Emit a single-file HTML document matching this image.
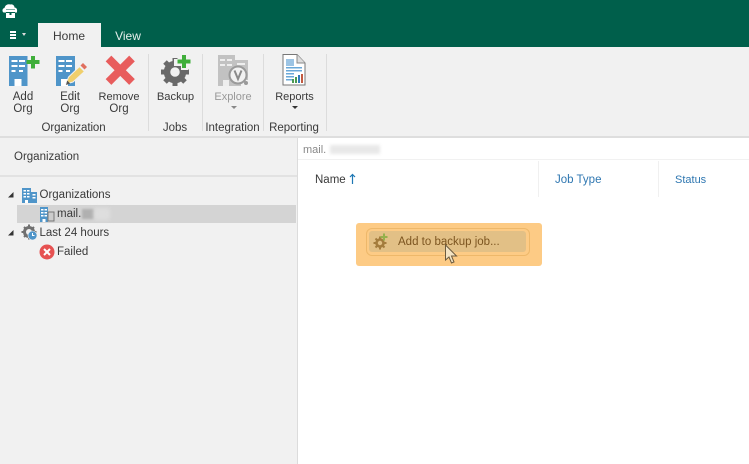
<!DOCTYPE html>
<html><head><meta charset="utf-8"><style>
*{box-sizing:border-box}
html,body{margin:0;padding:0}
body{width:749px;height:464px;overflow:hidden;position:relative;background:#fff;font-family:"Liberation Sans",sans-serif;font-size:11.5px;color:#3a3a3a}
.a{position:absolute}
.t{position:absolute;white-space:nowrap;line-height:14px}
.c{text-align:center;transform:translateX(-50%)}
svg{position:absolute;overflow:visible}
</style></head><body>
<div class="a" style="left:0;top:0;width:749px;height:47px;background:#005f4b"></div>
<svg style="left:2px;top:3px" width="16" height="16" viewBox="0 0 16 16"><path d="M1.500 9.500C0 8.500 0 5.500 2.500 5 3 2 6 .5 8.500 1.500 10.500 1 12.500 2.500 12.500 4.500 14.500 4.500 15.500 6.500 15 8.500L15 9.500H13V6.500H4V9.500z" fill="#fff"/><rect x="4" y="7" width="9" height="2" fill="#fff"/><rect x="4" y="10" width="9" height="5" fill="#fff"/><rect x="7.500" y="10" width="2" height="2" fill="#005f4b"/></svg>
<div class="a" style="left:10px;top:31px;width:6px;height:2px;background:#fff"></div>
<div class="a" style="left:10px;top:34px;width:6px;height:2px;background:#fff"></div>
<div class="a" style="left:10px;top:37px;width:6px;height:2px;background:#fff"></div>
<div class="a" style="left:22px;top:33px;border:2px solid transparent;border-top:3px solid #ddd"></div>
<div class="a" style="left:38px;top:23px;width:63px;height:24px;background:#f1f1f1"></div>
<div class="t c" style="left:69px;top:29px;font-size:12px">Home</div>
<div class="t c" style="left:128px;top:29px;color:#e5efec;font-size:12px">View</div>
<div class="a" style="left:0;top:47px;width:749px;height:90px;background:#f1f1f1"></div>
<div class="a" style="left:0;top:136px;width:749px;height:2px;background:#dedede"></div>

<!-- Add Org -->
<svg style="left:8px;top:54px" width="34" height="34" viewBox="0 0 34 34"><path d="M1 2H19.500V32H1z" fill="#4f95c9"/><g fill="#fff"><rect x="3.500" y="6" width="6" height="2"/><rect x="11" y="6" width="6" height="2"/><rect x="3.500" y="11" width="6" height="2"/><rect x="11" y="11" width="6" height="2"/><rect x="3.500" y="16" width="4" height="2"/><rect x="11" y="16" width="4" height="2"/><rect x="6.500" y="25" width="7" height="7"/></g><path d="M23 2h4v4h4.500v4H27v4.500h-4V10h-4.500V6H23z" fill="#3fae3a"/></svg>
<div class="t c" style="left:23px;top:90px">Add</div>
<div class="t c" style="left:23px;top:102px">Org</div>
<!-- Edit Org -->
<svg style="left:56px;top:54px" width="34" height="34" viewBox="0 0 34 34"><path d="M0 2H19V32H0z" fill="#4f95c9"/><g fill="#fff"><rect x="2.500" y="6" width="6" height="2"/><rect x="10" y="6" width="6" height="2"/><rect x="2.500" y="11" width="6" height="2"/><rect x="10" y="11" width="6" height="2"/><rect x="2.500" y="16" width="4" height="2"/><rect x="10" y="16" width="4" height="2"/><rect x="5" y="25" width="7" height="7"/></g><path d="M10 30l2.500-7 11-10.500 5 5L17 28z" fill="#f0cf6b" stroke="#f1f1f1" stroke-width="1"/><path d="M24.500 11.500l2.500-2.500 4 4-2.500 2.500z" fill="#e0705f"/><path d="M10 31l1.200-4.500 3 3z" fill="#555"/></svg>
<div class="t c" style="left:70px;top:90px">Edit</div>
<div class="t c" style="left:70px;top:102px">Org</div>
<!-- Remove Org -->
<svg style="left:104px;top:54px" width="33" height="33" viewBox="0 0 33 33"><path d="M4.500 4.500L28 28M28 4.500L4.500 28" stroke="#e85c5c" stroke-width="8" fill="none"/></svg>
<div class="t c" style="left:119px;top:90px;font-size:11px">Remove</div>
<div class="t c" style="left:119px;top:102px">Org</div>
<div class="t c" style="left:73.500px;top:121px;letter-spacing:-.1px">Organization</div>
<div class="a" style="left:148px;top:54px;width:1px;height:77px;background:#dcdcdc"></div>

<!-- Backup -->
<svg style="left:160px;top:54px" width="32" height="32" viewBox="0 0 32 32"><circle cx="15" cy="18" r="8" fill="none" stroke="#696969" stroke-width="6.500"/><g stroke="#696969" stroke-width="5"><path d="M15 4v5M15 27v5M1 18h5M24 18h5M5 8l4 4M21 24l4 4M5 28l4-4M21 12l4-4"/></g><path d="M14 5h7V0h7v5h4v7h-4v4h-7v-4h-7z" fill="#f1f1f1"/><path d="M22 1h4v4.500h4.500v4H26V14h-4V9.500h-4.500v-4H22z" fill="#3fae3a"/></svg>
<div class="t c" style="left:175.500px;top:90px;font-size:11.200px">Backup</div>
<div class="t c" style="left:175px;top:121px">Jobs</div>
<div class="a" style="left:202px;top:54px;width:1px;height:77px;background:#dcdcdc"></div>

<!-- Explore -->
<svg style="left:217px;top:54px" width="32" height="34" viewBox="0 0 32 34"><path d="M1 1H18V6H31V26H24V32H1z" fill="#c2c2c2"/><g fill="#eee"><rect x="3" y="5" width="5" height="2"/><rect x="10" y="5" width="5" height="2"/><rect x="3" y="10" width="5" height="2"/><rect x="10" y="10" width="5" height="2"/><rect x="20" y="9" width="8" height="2"/><rect x="6" y="26" width="6" height="6"/></g><circle cx="21" cy="21" r="8.500" fill="#f1f1f1" stroke="#9a9a9a" stroke-width="2"/><path d="M17.500 16.500l3.500 8.500 3.500-8.500" fill="none" stroke="#8a8a8a" stroke-width="2"/><circle cx="29" cy="29" r="2" fill="#999"/></svg>
<div class="t c" style="left:233px;top:90px;color:#999;font-size:11px">Explore</div>
<div class="a" style="left:231px;top:106px;border:3px solid transparent;border-top:3px solid #888"></div>
<div class="t c" style="left:232.500px;top:121px">Integration</div>
<div class="a" style="left:263px;top:54px;width:1px;height:77px;background:#dcdcdc"></div>

<!-- Reports -->
<svg style="left:282px;top:54px" width="24" height="32" viewBox="0 0 24 32"><path d="M1 .5H15L23 9V31H1z" fill="#fff" stroke="#777"/><path d="M15 .5V9H23" fill="#ddd" stroke="#888"/><rect x="4" y="5" width="8" height="7" fill="#9cc4e4"/><g fill="#6aa8d8"><rect x="4" y="13" width="16" height="1.500"/><rect x="4" y="16" width="16" height="1.500"/><rect x="4" y="19" width="8" height="1.500"/><rect x="4" y="22" width="8" height="1.500"/><rect x="4" y="25" width="8" height="1.500"/></g><rect x="10" y="25" width="2" height="4" fill="#4a9a52"/><rect x="13" y="23" width="2" height="6" fill="#4a9a52"/><rect x="16" y="21" width="2" height="8" fill="#2f7bbd"/><rect x="19" y="20" width="2" height="9" fill="#c2593f"/></svg>
<div class="t c" style="left:294.500px;top:90px;font-size:11px">Reports</div>
<div class="a" style="left:292px;top:106px;border:3px solid transparent;border-top:3.500px solid #333"></div>
<div class="t c" style="left:294px;top:121px">Reporting</div>
<div class="a" style="left:326px;top:54px;width:1px;height:77px;background:#dcdcdc"></div>

<!-- Sidebar -->
<div class="a" style="left:0;top:138px;width:297px;height:326px;background:#f1f1f1"></div>
<div class="a" style="left:297px;top:138px;width:1px;height:326px;background:#dcdcdc"></div>
<div class="t" style="left:14px;top:150px">Organization</div>
<div class="a" style="left:0;top:175px;width:297px;height:2px;background:#e2e2e2"></div>
<div class="a" style="left:17px;top:205px;width:279px;height:18px;background:#d4d4d4"></div>
<svg style="left:7px;top:191px" width="8" height="8" viewBox="0 0 8 8"><path d="M6.500 1v5.500H1z" fill="#333"/></svg>
<svg style="left:7px;top:229px" width="8" height="8" viewBox="0 0 8 8"><path d="M6.500 1v5.500H1z" fill="#333"/></svg>
<svg style="left:21px;top:187px" width="16" height="16" viewBox="0 0 16 16"><path d="M1 1H10V16H1zM10 5H16V16H10z" fill="#4f95c9"/><g fill="#fff"><rect x="2.500" y="3" width="2.500" height="1.500"/><rect x="6" y="3" width="2.500" height="1.500"/><rect x="2.500" y="6" width="2.500" height="1.500"/><rect x="6" y="6" width="2.500" height="1.500"/><rect x="2.500" y="9" width="2.500" height="1.500"/><rect x="6" y="9" width="2.500" height="1.500"/><rect x="4" y="13" width="3" height="3"/><rect x="11.500" y="7" width="3" height="1.500"/><rect x="11.500" y="10" width="3" height="1.500"/></g></svg>
<div class="t" style="left:39.500px;top:188px">Organizations</div>
<svg style="left:39px;top:206px" width="16" height="16" viewBox="0 0 16 16"><path d="M1 1H9V16H1z" fill="#4f95c9"/><g fill="#fff"><rect x="2" y="3" width="2.500" height="1.500"/><rect x="5.500" y="3" width="2.500" height="1.500"/><rect x="2" y="6" width="2.500" height="1.500"/><rect x="5.500" y="6" width="2.500" height="1.500"/><rect x="2" y="9" width="2.500" height="1.500"/><rect x="5.500" y="9" width="2.500" height="1.500"/><rect x="3.500" y="13" width="3" height="3"/></g><rect x="9" y="6" width="6" height="9" fill="#ccc" stroke="#777"/></svg>
<div class="t" style="left:57px;top:207px">mail.</div>
<div class="a" style="left:82px;top:209px;width:12px;height:10px;background:#b0b0b0;filter:blur(1px)"></div>
<div class="a" style="left:94px;top:208px;width:16px;height:12px;background:#dedede;filter:blur(2px)"></div>
<svg style="left:21px;top:224px" width="17" height="17" viewBox="0 0 17 17"><circle cx="8" cy="8" r="4.500" fill="none" stroke="#707070" stroke-width="3"/><path d="M8 0.500v3M8 12.500v3M0.500 8h3M12.500 8h3M3 3l2 2M11 11l2 2M3 13l2-2M11 5l2-2" stroke="#707070" stroke-width="2"/><circle cx="11.500" cy="11.500" r="4.500" fill="#4f95c9" stroke="#f1f1f1" stroke-width=".6"/><path d="M11.500 9v2.500h2" stroke="#fff" fill="none"/></svg>
<div class="t" style="left:39.500px;top:226px">Last 24 hours</div>
<svg style="left:39px;top:244px" width="16" height="16" viewBox="0 0 16 16"><circle cx="8" cy="8" r="7.500" fill="#e65252"/><path d="M5 5l6 6M11 5l-6 6" stroke="#fff" stroke-width="2"/></svg>
<div class="t" style="left:57px;top:245px">Failed</div>

<!-- Main -->
<div class="a" style="left:298px;top:159px;width:451px;height:1px;background:#f1f1f1"></div>
<div class="t" style="left:303px;top:143px;color:#888;font-size:11px">mail.</div>
<div class="a" style="left:330px;top:145px;width:50px;height:9px;background:#e8e8e8;filter:blur(1.500px)"></div>
<div class="a" style="left:538px;top:161px;width:1px;height:36px;background:#f0f0f0"></div>
<div class="a" style="left:658px;top:161px;width:1px;height:36px;background:#f0f0f0"></div>
<div class="t" style="left:315px;top:173px">Name</div>
<svg style="left:349px;top:173px" width="7" height="12" viewBox="0 0 7 12"><path d="M3.500 1.500V11M1 4l2.500-2.500L6 4" fill="none" stroke="#1f78b4" stroke-width="1.200"/></svg>
<div class="t" style="left:555px;top:173px;color:#2f77b1">Job Type</div>
<div class="t" style="left:675px;top:173px;color:#2f77b1;font-size:11px">Status</div>

<!-- Highlight -->
<div class="a" style="left:356px;top:223px;width:186px;height:43px;background:#fdcb85;border-radius:3px"></div>
<div class="a" style="left:366px;top:228px;width:164px;height:28px;border:1px solid #eeb86a;border-radius:6px"></div>
<div class="a" style="left:369px;top:231px;width:157px;height:21px;background:#e2c086;border-radius:3px"></div>
<svg style="left:373px;top:233px" width="16" height="17" viewBox="0 0 16 17"><circle cx="7" cy="10" r="3.500" fill="none" stroke="#a47c3d" stroke-width="2.600"/><path d="M7 3.500v2M7 14.500v2M.5 10h2M11.500 10h2M2.500 5.500l1.500 1.500M10 13l1.500 1.500M2.500 14.500L4 13" stroke="#a47c3d" stroke-width="2"/><path d="M10 .5h2v2.500h2.500v2H12v2.500h-2V5H7.500V3H10z" fill="#96b04c"/></svg>
<div class="t" style="left:398px;top:235px;color:#7c5520">Add to backup job...</div>
<svg style="left:444px;top:244px" width="16" height="22" viewBox="0 0 16 22"><path d="M1.500 1v15l3.500-3 2.500 6 2.500-1-2.500-6h5z" fill="#f3e3c3" stroke="#6b5a3e" stroke-width="1"/></svg>
</body></html>
